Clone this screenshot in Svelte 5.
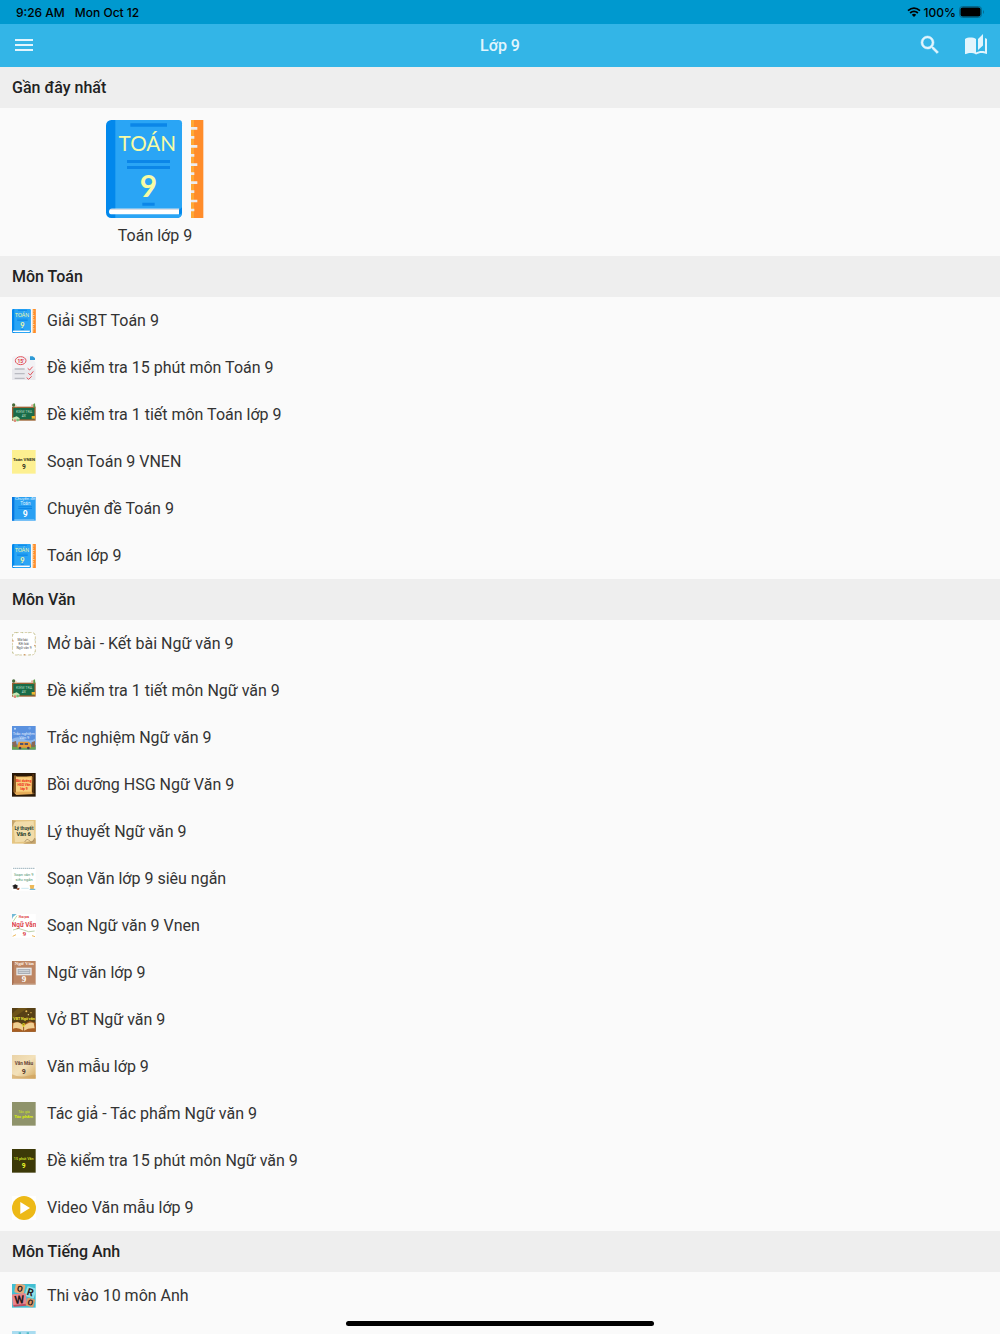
<script lang="ts">
  interface Item {
    icon: string;
    label: string;
  }

  interface Section {
    title: string;
    items: Item[];
  }

  const sections: Section[] = [
    {
      title: 'Môn Toán',
      items: [
        { icon: 'math', label: 'Giải SBT Toán 9' },
        { icon: 'checklist', label: 'Đề kiểm tra 15 phút môn Toán 9' },
        { icon: 'board', label: 'Đề kiểm tra 1 tiết môn Toán lớp 9' },
        { icon: 'math-vnen', label: 'Soạn Toán 9 VNEN' },
        { icon: 'math-topic', label: 'Chuyên đề Toán 9' },
        { icon: 'math', label: 'Toán lớp 9' }
      ]
    },
    {
      title: 'Môn Văn',
      items: [
        { icon: 'opening', label: 'Mở bài - Kết bài Ngữ văn 9' },
        { icon: 'board', label: 'Đề kiểm tra 1 tiết môn Ngữ văn 9' },
        { icon: 'quiz', label: 'Trắc nghiệm Ngữ văn 9' },
        { icon: 'scroll', label: 'Bồi dưỡng HSG Ngữ Văn 9' },
        { icon: 'theory', label: 'Lý thuyết Ngữ văn 9' },
        { icon: 'short', label: 'Soạn Văn lớp 9 siêu ngắn' },
        { icon: 'lit-vnen', label: 'Soạn Ngữ văn 9 Vnen' },
        { icon: 'lit-book', label: 'Ngữ văn lớp 9' },
        { icon: 'workbook', label: 'Vở BT Ngữ văn 9' },
        { icon: 'essay', label: 'Văn mẫu lớp 9' },
        { icon: 'author', label: 'Tác giả - Tác phẩm Ngữ văn 9' },
        { icon: 'test15', label: 'Đề kiểm tra 15 phút môn Ngữ văn 9' },
        { icon: 'video', label: 'Video Văn mẫu lớp 9' }
      ]
    },
    {
      title: 'Môn Tiếng Anh',
      items: [
        { icon: 'word', label: 'Thi vào 10 môn Anh' },
        { icon: 'english', label: '' }
      ]
    }
  ];
</script>

{#snippet mathBook()}
  <svg viewBox="0 0 294 294" aria-hidden="true">
    <rect width="228" height="294" rx="16" fill="#0288ec" />
    <path d="M28 0h190q10 0 10 10v268q0 14-14 16H28z" fill="#2aa5f5" />
    <path d="M73 10h110v10H73zM63 120h129v9H63zM63 138h129v9H63zM109 248h37v9h-37z" fill="#0b86e8" />
    <text x="124" y="93" font-size="62" text-anchor="middle" fill="#f7fba5" class="round">TOÁN</text>
    <text x="127" y="231" font-size="90" text-anchor="middle" fill="#f7fba5" class="round bold">9</text>
    <path d="M18 266h201v17H18q-9 0-9-8t9-9z" fill="#fff" />
    <path d="M14 266h205v4H10z" fill="#dcdde4" />
    <path d="M219 270l9-8v18l-9 4z" fill="#0288ec" />
    <rect x="255" width="37" height="294" fill="#ff8c2a" />
    <path d="M255 0h9v294h-9z" fill="#ffa733" />
    <path
      d="M255 21h19v8h-19zM255 75h19v8h-19zM255 130h19v8h-19zM255 184h19v8h-19zM255 239h19v8h-19zM255 48h10v8h-10zM255 102h10v8h-10zM255 157h10v8h-10zM255 211h10v8h-10zM255 266h10v8h-10z"
      fill="#ececee"
    />
  </svg>
{/snippet}

<!-- Row thumbnails share a 72 unit square -->
{#snippet thumb(icon: string)}
  {#if icon === 'math'}
    {@render mathBook()}
  {:else}
    <svg viewBox="0 0 72 72" aria-hidden="true">
      {#if icon === 'checklist'}
        <path d="M0 6l6-5h47l17 17v54H0z" fill="#f2f2f5" />
        <path d="M0 40h70v32H0z" fill="#e9e9ed" />
        <path d="M54 1h8l7 5v6H54z" fill="#2e9ad6" />
        <ellipse cx="26" cy="14" rx="16" ry="12" fill="none" stroke="#e3525a" stroke-width="3" />
        <text x="26" y="20" font-size="15" text-anchor="middle" fill="#dd3540" class="bold">15'</text>
        <path d="M8 39h30M8 53h30M8 67h30" stroke="#b9bac1" stroke-width="4" />
        <path d="M47 37l6 5 9-10M49 52l6 5 9-11M44 65l6 5 9-9" fill="none" stroke="#e3525a" stroke-width="3" />
      {:else if icon === 'board'}
        <rect y="11" width="71" height="42" fill="#9c6132" />
        <rect x="4" y="15" width="63" height="34" fill="#196b48" />
        <text x="36" y="31" font-size="11" text-anchor="middle" fill="#a9d6bd">KIỂM TRA</text>
        <text x="36" y="43" font-size="10" text-anchor="middle" fill="#cde7d7">45'</text>
        <circle cx="5" cy="6" r="5" fill="#476a39" />
        <circle cx="12" cy="10" r="3" fill="#edc7a2" />
        <circle cx="61" cy="8" r="4" fill="#e8b0a1" />
        <path d="M64 3l5-2 1 11-6 3z" fill="#5c9a49" />
        <path d="M0 45l14-5 9 6-2 9H5z" fill="#c8e7b4" />
        <circle cx="9" cy="53" r="4" fill="#df8778" />
        <circle cx="17" cy="51" r="4" fill="#71bd76" />
        <path d="M59 39h10v8H59z" fill="#f0b62f" />
      {:else if icon === 'math-vnen'}
        <rect width="71" height="71" fill="#fdf091" />
        <text x="36" y="33" font-size="13" text-anchor="middle" fill="#36351f" class="bold">Toán VNEN</text>
        <text x="36" y="57" font-size="20" text-anchor="middle" fill="#36351f" class="bold">9</text>
      {:else if icon === 'math-topic'}
        <rect width="71" height="71" fill="#2aa0f3" />
        <path d="M0 0h7v71H0z" fill="#0877df" />
        <text x="39" y="9" font-size="13" text-anchor="middle" fill="#dff2ff">Chuyên đề</text>
        <text x="40" y="23" font-size="14" text-anchor="middle" fill="#dff2ff">Toán</text>
        <path d="M19 28h41v3H19zM19 33h41v3H19z" fill="#0b86e8" />
        <text x="40" y="61" font-size="26" text-anchor="middle" fill="#fff" class="bold">9</text>
        <path d="M7 67h60v3H7z" fill="#86c7f7" />
      {:else if icon === 'opening'}
        <rect x="1" y="1" width="69" height="68" rx="11" fill="#fff" stroke="#d6c9a0" stroke-width="3" stroke-dasharray="8 5" />
        <rect x="2" y="2" width="67" height="66" rx="10" fill="none" stroke="#a8be87" stroke-width="2" stroke-dasharray="4 14" />
        <circle cx="3" cy="27" r="2" fill="#dc8d62" />
        <circle cx="68" cy="40" r="2" fill="#dc8d62" />
        <circle cx="38" cy="68" r="2" fill="#dc8d62" />
        <text x="32" y="27" font-size="10" text-anchor="middle" fill="#474747">Mở bài</text>
        <text x="35" y="39" font-size="10" text-anchor="middle" fill="#474747">Kết bài</text>
        <text x="36" y="51" font-size="10" text-anchor="middle" fill="#474747">Ngữ văn 9</text>
      {:else if icon === 'quiz'}
        <rect width="71" height="71" fill="#5a91df" />
        <path d="M0 39q18-10 36 0t35-2v16H0z" fill="#8eb7ea" />
        <circle cx="9" cy="8" r="3" fill="#cae2fb" />
        <circle cx="53" cy="7" r="4" fill="#79abed" />
        <text x="35" y="28" font-size="12" text-anchor="middle" fill="#e5f0ff">Trắc nghiệm</text>
        <text x="37" y="40" font-size="12" text-anchor="middle" fill="#e5f0ff">Văn 9</text>
        <path d="M0 57h71v14H0z" fill="#6aa354" />
        <path d="M20 47h31l6 8v10H17v-9z" fill="#e99b38" />
        <path d="M24 51h10v6H24zM38 51h10v6H38z" fill="#4f5470" />
        <path d="M0 49l12-4 3 18H3zM59 49l10-4v18H58z" fill="#8a6955" />
        <circle cx="24" cy="66" r="4" fill="#47385c" />
        <circle cx="49" cy="66" r="4" fill="#47385c" />
      {:else if icon === 'scroll'}
        <rect width="71" height="71" fill="#2a1807" />
        <path d="M7 8q12 5 52 1l4 4-3 43 8 7-55 3-7-7z" fill="#e8ae5a" />
        <path d="M12 13h45v43H12z" fill="#f8cf7c" />
        <path d="M6 9q4-5 6 0v48q-5 7-8-1z" fill="#956026" />
        <path d="M61 3h5v59h-5z" fill="#53320f" />
        <text x="35" y="28" font-size="10" text-anchor="middle" fill="#ee2a18" class="bold">Bồi dưỡng</text>
        <text x="36" y="40" font-size="10" text-anchor="middle" fill="#ee2a18" class="bold">HSG Văn</text>
        <text x="36" y="52" font-size="10" text-anchor="middle" fill="#ee2a18" class="bold">lớp 9</text>
      {:else if icon === 'theory'}
        <rect width="71" height="71" fill="#e5c582" />
        <path d="M4 5l61-2 3 60-59 4z" fill="#f1dcaa" />
        <path d="M0 0l12 3-5 5-7 14zM71 55v16H33l12-5 14-2z" fill="#c4a46c" />
        <path d="M38 66q7-14 15-3t15-9" fill="none" stroke="#9b815b" stroke-width="2" />
        <text x="36" y="31" font-size="14" text-anchor="middle" fill="#294230" class="bold">Lý thuyết</text>
        <text x="35" y="49" font-size="17" text-anchor="middle" fill="#223b28" class="bold">Văn 6</text>
      {:else if icon === 'short'}
        <rect width="71" height="71" fill="#fff" />
        <path d="M4 4h65" stroke="#85a0ac" stroke-width="4" stroke-dasharray="3 3" />
        <text x="35" y="28" font-size="12" text-anchor="middle" fill="#4b936b">Soạn văn 9</text>
        <text x="36" y="41" font-size="12" text-anchor="middle" fill="#4b936b">siêu ngắn</text>
        <path d="M0 57l10-5 9 5-9 5zM4 60h12v5H4z" fill="#1d1a1b" />
        <path d="M15 64l8-2-2 7-7-1z" fill="#a35134" />
        <path d="M28 64h22" stroke="#b2dcec" stroke-width="2" />
        <path d="M53 54h14l-2 12H55z" fill="#eeb957" />
        <path d="M55 65h15v4H52z" fill="#75b9d8" />
      {:else if icon === 'lit-vnen'}
        <rect width="71" height="71" fill="#fff" />
        <path d="M0 0h14L3 9l-3 7z" fill="#71bad6" />
        <path d="M3 23l12-18" stroke="#9dcc6b" stroke-width="2" />
        <text x="35" y="13" font-size="15" text-anchor="middle" fill="#dc3438" class="serif">Soạn</text>
        <text x="36" y="39" font-size="19" text-anchor="middle" fill="#dc4249" class="bold">Ngữ Văn</text>
        <text x="37" y="65" font-size="20" text-anchor="middle" fill="#d82f38" class="serif">9</text>
        <path d="M3 48q18-9 32 0t33 3" fill="none" stroke="#9ab982" stroke-width="2" />
        <path d="M2 67l10-5M60 65l9 3" stroke="#edb95c" stroke-width="3" />
      {:else if icon === 'lit-book'}
        <rect width="71" height="71" fill="#bd8664" />
        <path d="M0 0h5v71H0z" fill="#aa7253" />
        <text x="37" y="13" font-size="15" text-anchor="middle" fill="#fff1e7" class="serif">Ngữ Văn</text>
        <rect x="13" y="20" width="46" height="23" fill="#e8e8e8" />
        <rect x="17" y="24" width="38" height="15" fill="#a9adb5" />
        <path d="M20 28h32M20 34h32" stroke="#edf0f2" stroke-width="2" />
        <text x="36" y="63" font-size="27" text-anchor="middle" fill="#fff" class="serif">9</text>
        <path d="M3 68h67v3H3z" fill="#cbb09d" />
      {:else if icon === 'workbook'}
        <rect width="71" height="71" fill="#574016" />
        <path d="M0 17L19 0h28L0 32z" fill="#6e5318" />
        <circle cx="43" cy="10" r="3" fill="#e9bd55" />
        <circle cx="57" cy="14" r="2" fill="#e9bd55" />
        <circle cx="49" cy="20" r="2" fill="#fff0a4" />
        <path d="M0 45l16-4 19 9 18-11 18 6v26H0z" fill="#a95d21" />
        <path d="M4 46q18-9 30 9v13Q17 56 3 62zM36 55q14-15 29-10l3 16q-18-2-32 7z" fill="#f0cf92" />
        <path d="M35 56v13" stroke="#8a4f20" stroke-width="2" />
        <text x="36" y="36" font-size="11" text-anchor="middle" fill="#eee537" class="bold">VBT Ngữ văn</text>
        <text x="35" y="57" font-size="17" text-anchor="middle" fill="#e7e129" class="bold">9</text>
      {:else if icon === 'essay'}
        <defs>
          <linearGradient id="paper" x2="1" y2="1">
            <stop stop-color="#ead3a7" />
            <stop offset="0.5" stop-color="#f3e1ba" />
            <stop offset="1" stop-color="#d4aa60" />
          </linearGradient>
        </defs>
        <rect width="71" height="71" fill="url(#paper)" />
        <path d="M0 58q20 10 44 5t27-3v11H0z" fill="#cfa05c" opacity="0.6" />
        <text x="36" y="31" font-size="14" text-anchor="middle" fill="#654334" class="bold">Văn Mẫu</text>
        <text x="35" y="56" font-size="21" text-anchor="middle" fill="#533329" class="bold">9</text>
      {:else if icon === 'author'}
        <rect width="71" height="71" fill="#8f936b" />
        <text x="36" y="32" font-size="11" text-anchor="middle" fill="#cbe21f">Tác giả</text>
        <text x="35" y="47" font-size="13" text-anchor="middle" fill="#d7ec0e" class="bold">Tác phẩm</text>
      {:else if icon === 'test15'}
        <rect width="71" height="71" fill="#3c3908" />
        <text x="35" y="33" font-size="11" text-anchor="middle" fill="#c8d522" class="bold">15 phút Văn</text>
        <text x="35" y="57" font-size="20" text-anchor="middle" fill="#edf928" class="bold">9</text>
      {:else if icon === 'video'}
        <rect width="72" height="72" fill="#fff" />
        <circle cx="36" cy="36" r="36" fill="#edb917" />
        <path d="M25 18l29 18-29 18z" fill="#fff" />
      {:else if icon === 'word'}
        <rect width="71" height="71" fill="#42bfd2" />
        <g transform="rotate(12 24 14)">
          <rect x="9" y="0" width="29" height="28" rx="4" fill="#e7a877" />
          <text x="24" y="23" font-size="25" text-anchor="middle" fill="#28191c" class="bold">O</text>
        </g>
        <g transform="rotate(18 54 25)">
          <rect x="41" y="9" width="29" height="31" rx="3" fill="#8fe0e6" />
          <text x="55" y="35" font-size="30" text-anchor="middle" fill="#28191c" class="bold">R</text>
        </g>
        <g transform="rotate(-5 22 46)">
          <rect x="1" y="29" width="42" height="36" rx="4" fill="#ea858d" />
          <path d="M2 61h40v6H4z" fill="#bd4e62" />
          <text x="22" y="59" font-size="34" text-anchor="middle" fill="#28191c" class="bold">W</text>
        </g>
        <g transform="rotate(15 55 56)">
          <rect x="43" y="43" width="24" height="25" rx="4" fill="#dd996b" />
          <text x="55" y="64" font-size="24" text-anchor="middle" fill="#28191c" class="bold">O</text>
        </g>
      {:else}
        <rect width="71" height="71" fill="#a9dcf0" />
        <path d="M20 4h7v6h-7zM44 4h7v6h-7z" fill="#55bcc6" />
      {/if}
    </svg>
  {/if}
{/snippet}

<div class="screen">
  <div class="status-bar">
    <span>9:26 AM</span>
    <span>Mon Oct 12</span>
    <div class="status-right">
      <svg class="wifi" viewBox="0 0 14 10" aria-hidden="true">
        <path d="M1 3.6Q7-1.4 13 3.6M3.1 6Q7 2.8 10.9 6" fill="none" stroke="#000" stroke-width="1.8" />
        <path d="M4.8 7.7Q7 6 9.2 7.7L7 10z" />
      </svg>
      <span>100%</span>
      <svg class="battery" viewBox="0 0 26 12" aria-hidden="true">
        <rect x="0.5" y="0.5" width="22" height="11" rx="3" fill="none" stroke="#06698d" />
        <rect x="1.5" y="1.5" width="20" height="9" rx="2" />
        <path d="M24 4q2 2 0 4z" fill="#06698d" />
      </svg>
    </div>
  </div>

  <header class="app-bar">
    <button class="icon-btn" aria-label="Menu">
      <svg viewBox="0 1 24 24"><path d="M3 6h18v2H3zM3 11h18v2H3zM3 16h18v2H3z" /></svg>
    </button>
    <h1>Lớp 9</h1>
    <div class="actions">
      <button class="icon-btn" aria-label="Tìm kiếm">
        <svg viewBox="0 1 24 24" stroke="currentColor" stroke-width="0.5">
          <path d="M15.5 14h-.79l-.28-.27A6.47 6.47 0 0 0 16 9.5 6.5 6.5 0 1 0 9.5 16c1.61 0 3.09-.59 4.23-1.57l.27.28v.79l5 4.99L20.49 19l-4.99-5zm-6 0C7.01 14 5 11.99 5 9.5S7.01 5 9.5 5 14 7.01 14 9.5 11.99 14 9.5 14z" />
        </svg>
      </button>
      <button class="icon-btn" aria-label="Sách">
        <svg viewBox="0 1 24 24">
          <path d="M19 1l-5 5v11l5-4.5V1zM1 6v14.65c0 .25.25.5.5.5.1 0 .15-.05.25-.05C3.1 20.45 5.05 20 6.5 20c1.95 0 4.05.4 5.5 1.5V6c-1.45-1.1-3.55-1.5-5.5-1.5S2.45 4.9 1 6zm22 13.5V6c-.6-.45-1.25-.75-2-1v13.5c-1.1-.35-2.3-.5-3.5-.5-1.7 0-4.15.65-5.5 1.5v2c1.35-.85 3.8-1.5 5.5-1.5 1.65 0 3.35.3 4.75 1.05.1.05.15.05.25.05.25 0 .5-.25.5-.5v-1.1z" />
        </svg>
      </button>
    </div>
  </header>

  <main>
    <h2>Gần đây nhất</h2>
    <div class="recent">
      <a class="tile" href="#recent">
        {@render mathBook()}
        <span>Toán lớp 9</span>
      </a>
    </div>

    {#each sections as section}
      <h2>{section.title}</h2>
      <ul>
        {#each section.items as item}
          <li>
            <a class="row" href="#{item.icon}">
              {@render thumb(item.icon)}
              <span>{item.label}</span>
            </a>
          </li>
        {/each}
      </ul>
    {/each}
  </main>

  <div class="home-indicator"></div>
</div>

<style>
  :global(body) { margin: 0; background: #fafafa; }

  .screen {
    position: relative;
    display: flex;
    flex-direction: column;
    height: 100vh;
    overflow: hidden;
    background: #fafafa;
    color: #333;
    font-family: Roboto, sans-serif;
    font-size: 16px;
  }

  .status-bar {
    display: flex;
    align-items: center;
    gap: 10px;
    flex-shrink: 0;
    height: 24px;
    padding: 0 15px 0 16px;
    box-sizing: border-box;
    background: #0099cf;
    color: #000;
    font-family: Inter, sans-serif;
    font-size: 12px;
    font-weight: 500;
  }
  .status-right {
    display: flex;
    align-items: center;
    gap: 3px;
    margin-left: auto;
  }
  .wifi { width: 14px; height: 10px; }
  .battery { width: 26px; height: 12px; }

  .app-bar {
    display: grid;
    grid-template-columns: 1fr auto 1fr;
    align-items: center;
    flex-shrink: 0;
    height: 43px;
    padding: 0 12px;
    background: #33b5e7;
    color: #e2f5fd;
  }
  h1 { margin: 0; font-size: 16px; font-weight: 500; }
  .actions {
    display: flex;
    justify-content: flex-end;
    gap: 22px;
  }
  .icon-btn {
    width: 24px;
    height: 24px;
    padding: 0;
    border: none;
    background: none;
    color: inherit;
    cursor: pointer;
  }
  .icon-btn svg { display: block; fill: currentColor; overflow: visible; }

  main {
    flex: 1;
    min-height: 0;
    overflow-y: auto;
    scrollbar-width: none;
  }

  h2 {
    margin: 0;
    padding: 0 12px;
    background: #eee;
    color: #222;
    font-size: 16px;
    font-weight: 500;
    line-height: 41px;
  }

  .recent { display: flex; padding: 12px 0 10px; }
  .tile {
    display: flex;
    flex-direction: column;
    align-items: center;
    gap: 8px;
    width: 31%;
    color: inherit;
    line-height: 20px;
    text-decoration: none;
  }
  .tile svg { width: 98px; height: 98px; }

  ul { margin: 0; padding: 0; list-style: none; }
  .row {
    display: flex;
    align-items: center;
    gap: 11px;
    height: 47px;
    padding: 0 12px;
    color: inherit;
    text-decoration: none;
  }
  .row svg { flex-shrink: 0; width: 24px; height: 24px; }

  .round { font-family: Lato, sans-serif; }
  .bold { font-weight: 700; }
  .serif { font-family: 'Liberation Serif', serif; font-weight: 700; }

  /* Floats over the scrolling list */
  .home-indicator {
    position: absolute;
    bottom: 8px;
    left: 50%;
    width: 308px;
    height: 5px;
    border-radius: 3px;
    background: #000;
    transform: translateX(-50%);
  }
</style>
